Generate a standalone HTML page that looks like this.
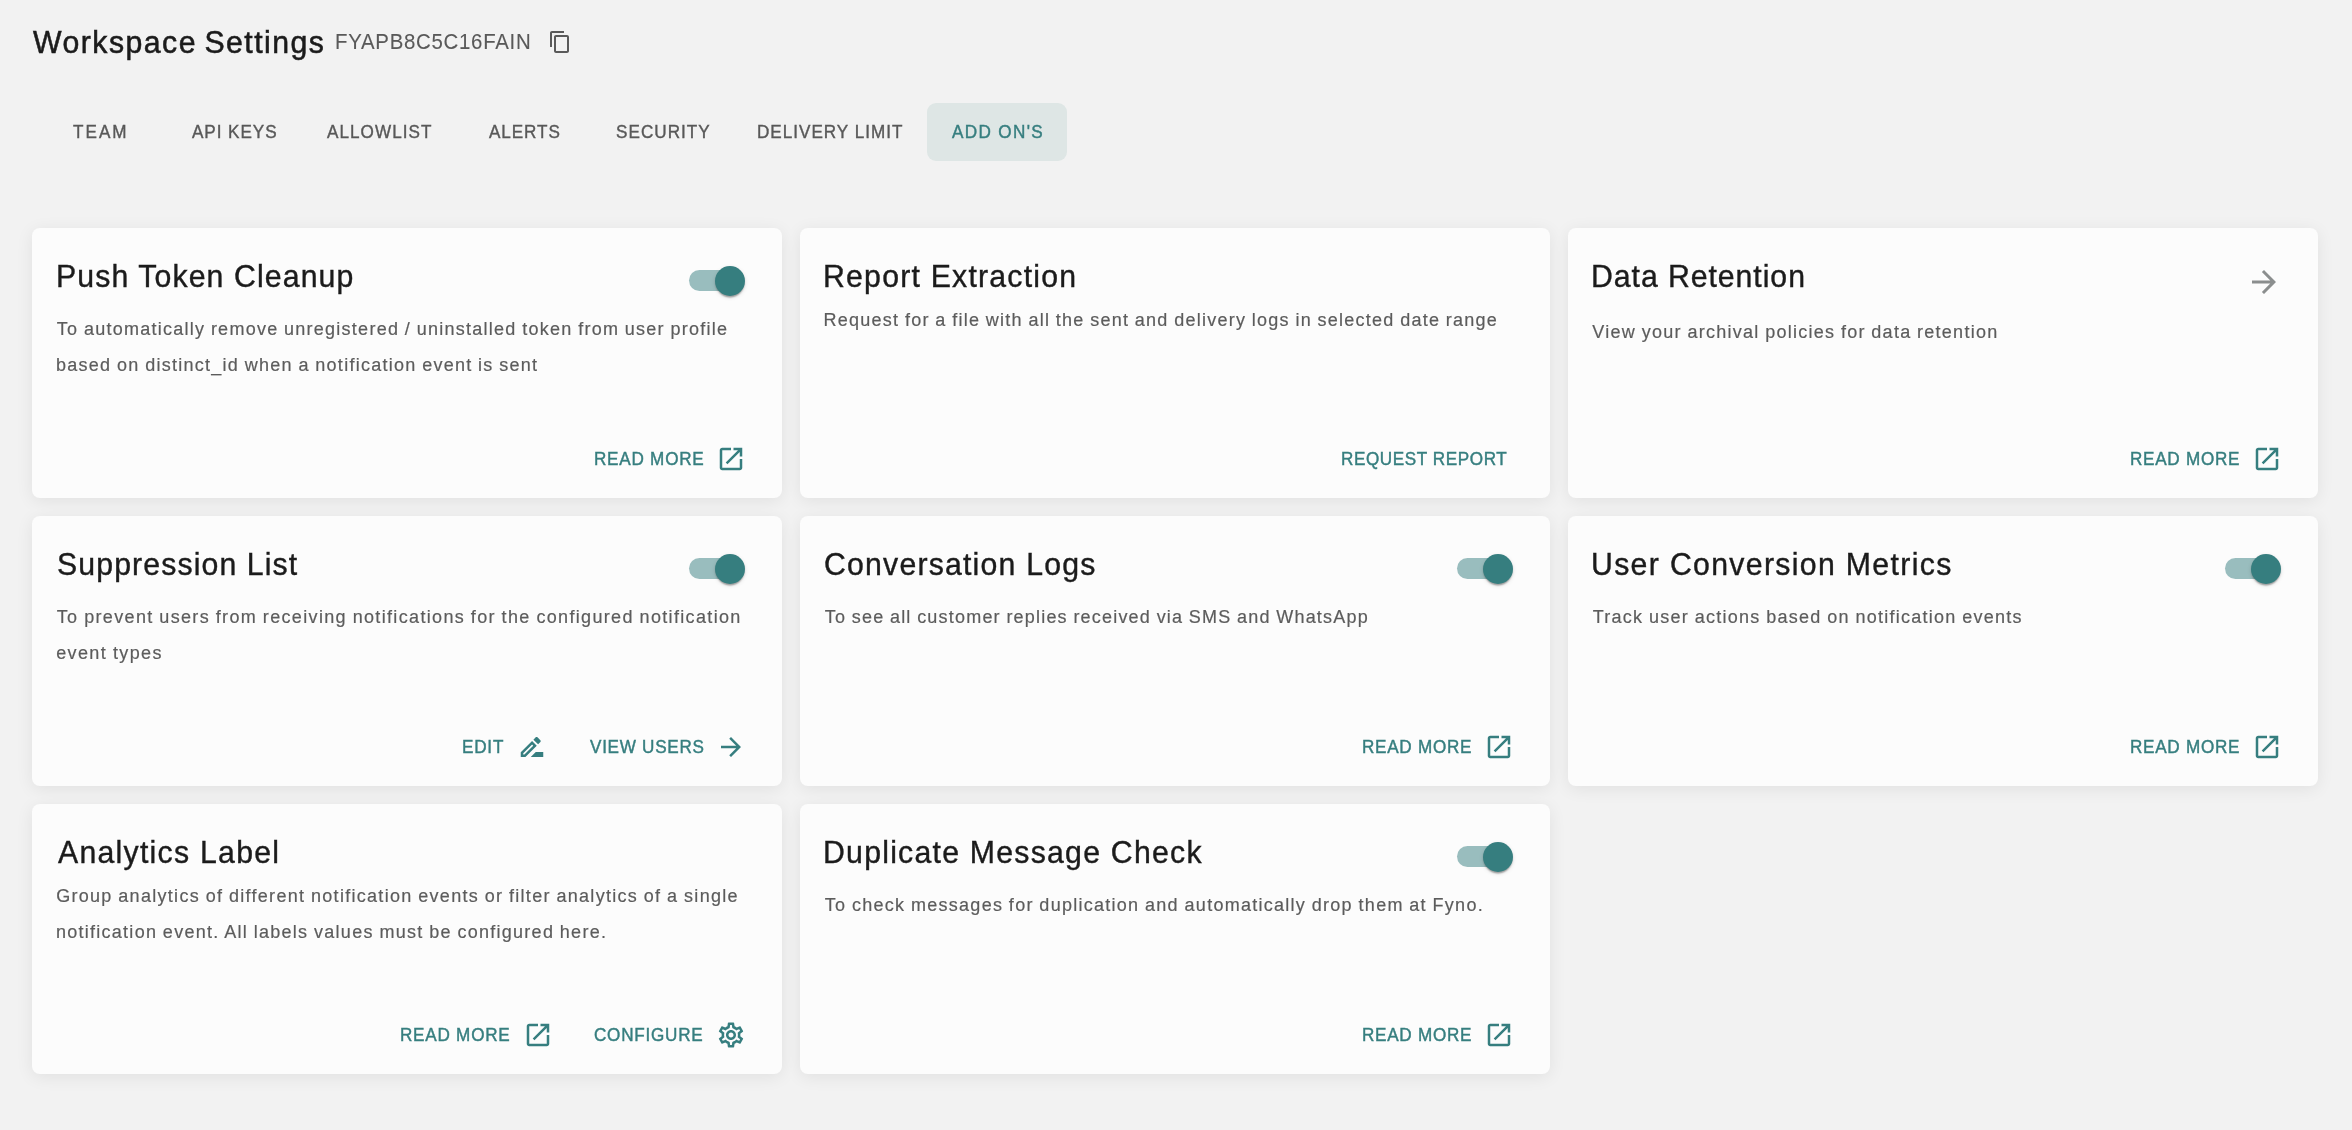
<!DOCTYPE html>
<html lang="en">
<head>
<meta charset="utf-8">
<title>Workspace Settings</title>
<style>
*{box-sizing:border-box;margin:0;padding:0}
html,body{width:2352px;height:1130px;overflow:hidden}
#app{position:absolute;left:0;top:0;width:2352px;height:1130px;will-change:transform}
body{background:#f2f2f2;font-family:"Liberation Sans",sans-serif;position:relative}
.t{position:absolute;white-space:nowrap;line-height:1;font-weight:400;transform-origin:0 50%}
.h1{transform:scaleX(.97);font-size:31.2px;color:#1b1b1b;-webkit-text-stroke:.55px #1b1b1b;word-spacing:-2.5px}
.wsid{transform:scaleX(.92);font-size:22.2px;color:#595959;-webkit-text-stroke:.1px #595959}
.tab{transform:scaleX(.95);font-size:18px;color:#585858;-webkit-text-stroke:.4px #585858}
.tab.sel{color:#367e7f;-webkit-text-stroke:.45px #367e7f}
.pill{position:absolute;left:927px;top:103px;width:140px;height:57.5px;border-radius:9px;background:#dee6e5}
.copy{position:absolute;left:548px;top:30px;width:24px;height:24px;fill:#5a5a5a}
.card{position:absolute;width:750px;height:270px;border-radius:8px;background:#fcfcfc;box-shadow:0 3px 17px 0 rgba(0,0,0,.075)}
.title{transform:scaleX(.97);font-size:31.2px;color:#1b1b1b;-webkit-text-stroke:.4px #1b1b1b}
.dl{word-spacing:-.6px;font-size:18px;color:#5c5c5c;-webkit-text-stroke:.2px #5c5c5c}
.btn{transform:scaleX(.95);font-size:18px;color:#367e7f;-webkit-text-stroke:.45px #367e7f}
.ic{position:absolute;width:30px;height:30px;fill:#367e7f}
.go{position:absolute;left:678px;top:36px;width:36px;height:36px;fill:#8b8e8e}
.sw{position:absolute;left:657px;top:38px;width:56px;height:30px}
.sw i{position:absolute;left:0;top:4px;width:51px;height:21px;border-radius:10.5px;background:#367e7f;opacity:.5}
.sw b{position:absolute;left:26px;top:0;width:30px;height:30px;border-radius:50%;background:#367e7f;box-shadow:0 3px 1.5px -1.5px rgba(0,0,0,.2),0 1.5px 1.5px 0 rgba(0,0,0,.14),0 1.5px 4.5px 0 rgba(0,0,0,.12)}
button{border:0;background:none;font-family:inherit;cursor:pointer}
h1,h2{font-weight:400}
a{text-decoration:none}
</style>
</head>
<body>
<div id="app">
<header>

<h1 class="t h1" style="left:32.81px;top:27.19px;letter-spacing:1.511px">Workspace Settings</h1>
<span class="t wsid" style="left:335.43px;top:31.31px;letter-spacing:0.777px">FYAPB8C5C16FAIN</span>
<svg class="copy" viewBox="0 0 24 24"><path d="M16 1H4c-1.100 0-2 .9-2 2v14h2V3h12V1zm3 4H8c-1.100 0-2 .9-2 2v14c0 1.100.9 2 2 2h11c1.100 0 2-.9 2-2V7c0-1.100-.9-2-2-2zm0 16H8V7h11v14z"/></svg>
</header>
<nav>
<div class="pill"></div>
<a class="t tab" style="left:73.34px;top:122.76px;letter-spacing:2.127px">TEAM</a>
<a class="t tab" style="left:192.28px;top:122.76px;letter-spacing:0.998px">API KEYS</a>
<a class="t tab" style="left:326.78px;top:122.76px;letter-spacing:1.12px">ALLOWLIST</a>
<a class="t tab" style="left:489.43px;top:122.76px;letter-spacing:0.971px">ALERTS</a>
<a class="t tab" style="left:615.79px;top:122.76px;letter-spacing:1.087px">SECURITY</a>
<a class="t tab" style="left:756.59px;top:122.76px;letter-spacing:1.047px">DELIVERY LIMIT</a>
<a class="t tab sel" style="left:951.76px;top:122.76px;letter-spacing:1.441px">ADD ON'S</a>
</nav>
<main>
<section class="card" style="left:32px;top:228px">
<h2 class="t title" style="left:23.82px;top:33.19px;letter-spacing:1.134px">Push Token Cleanup</h2>
<div class="sw"><i></i><b></b></div>
<p>
<span class="t dl" style="left:24.74px;top:91.76px;letter-spacing:1.252px">To automatically remove unregistered / uninstalled token from user profile</span>
<span class="t dl" style="left:23.99px;top:127.76px;letter-spacing:1.257px">based on distinct_id when a notification event is sent</span>
</p>
<button class="t btn" style="left:561.64px;top:221.76px;letter-spacing:0.812px">READ MORE</button>
<svg class="ic" viewBox="0 0 24 24" style="left:684px;top:216px"><path d="M19 19H5V5h7V3H5c-1.11 0-2 .9-2 2v14c0 1.1.89 2 2 2h14c1.1 0 2-.9 2-2v-7h-2v7zM14 3v2h3.59l-9.830 9.830 1.410 1.410L19 6.410V10h2V3h-7z"/></svg>
</section>
<section class="card" style="left:800px;top:228px">
<h2 class="t title" style="left:23.32px;top:33.19px;letter-spacing:1.251px">Report Extraction</h2>
<p>
<span class="t dl" style="left:23.55px;top:82.76px;letter-spacing:1.241px">Request for a file with all the sent and delivery logs in selected date range</span>
</p>
<button class="t btn" style="left:541.14px;top:221.76px;letter-spacing:0.626px">REQUEST REPORT</button>
</section>
<section class="card" style="left:1568px;top:228px">
<h2 class="t title" style="left:23.32px;top:33.19px;letter-spacing:0.963px">Data Retention</h2>
<svg class="go" viewBox="0 0 24 24"><path d="m12 4-1.410 1.410L16.170 11H4v2h12.170l-5.580 5.590L12 20l8-8z"/></svg>
<p>
<span class="t dl" style="left:24.37px;top:94.76px;letter-spacing:1.257px">View your archival policies for data retention</span>
</p>
<button class="t btn" style="left:562.43px;top:221.76px;letter-spacing:0.776px">READ MORE</button>
<svg class="ic" viewBox="0 0 24 24" style="left:684px;top:216px"><path d="M19 19H5V5h7V3H5c-1.11 0-2 .9-2 2v14c0 1.1.89 2 2 2h14c1.1 0 2-.9 2-2v-7h-2v7zM14 3v2h3.59l-9.830 9.830 1.410 1.410L19 6.410V10h2V3h-7z"/></svg>
</section>
<section class="card" style="left:32px;top:516px">
<h2 class="t title" style="left:24.57px;top:33.19px;letter-spacing:1.138px">Suppression List</h2>
<div class="sw"><i></i><b></b></div>
<p>
<span class="t dl" style="left:24.74px;top:91.76px;letter-spacing:1.338px">To prevent users from receiving notifications for the configured notification</span>
<span class="t dl" style="left:24.23px;top:127.76px;letter-spacing:1.373px">event types</span>
</p>
<button class="t btn" style="left:430.14px;top:221.76px;letter-spacing:0.845px">EDIT</button>
<svg class="ic" viewBox="0 0 24 24" style="left:485px;top:216px"><path d="M15 16l-4 4h10v-4zM12.060 7.190L3 16.250V20h3.750l9.060-9.060-3.750-3.750zM5.920 18H5v-.92l7.060-7.060.92.920L5.920 18zM18.710 8.040c.39-.39.39-1.020 0-1.410l-2.340-2.340c-.2-.2-.45-.29-.71-.29-.25 0-.51.1-.7.290l-1.830 1.830 3.750 3.750 1.830-1.830z"/></svg>
<button class="t btn" style="left:557.76px;top:221.76px;letter-spacing:0.765px">VIEW USERS</button>
<svg class="ic" viewBox="0 0 24 24" style="left:684px;top:216px"><path d="m12 4-1.410 1.410L16.170 11H4v2h12.170l-5.580 5.590L12 20l8-8z"/></svg>
</section>
<section class="card" style="left:800px;top:516px">
<h2 class="t title" style="left:24.29px;top:33.19px;letter-spacing:1.228px">Conversation Logs</h2>
<div class="sw"><i></i><b></b></div>
<p>
<span class="t dl" style="left:24.74px;top:91.76px;letter-spacing:1.199px">To see all customer replies received via SMS and WhatsApp</span>
</p>
<button class="t btn" style="left:562.43px;top:221.76px;letter-spacing:0.776px">READ MORE</button>
<svg class="ic" viewBox="0 0 24 24" style="left:684px;top:216px"><path d="M19 19H5V5h7V3H5c-1.11 0-2 .9-2 2v14c0 1.1.89 2 2 2h14c1.1 0 2-.9 2-2v-7h-2v7zM14 3v2h3.59l-9.830 9.830 1.410 1.410L19 6.410V10h2V3h-7z"/></svg>
</section>
<section class="card" style="left:1568px;top:516px">
<h2 class="t title" style="left:23.36px;top:33.19px;letter-spacing:1.363px">User Conversion Metrics</h2>
<div class="sw"><i></i><b></b></div>
<p>
<span class="t dl" style="left:24.74px;top:91.76px;letter-spacing:1.259px">Track user actions based on notification events</span>
</p>
<button class="t btn" style="left:562.43px;top:221.76px;letter-spacing:0.776px">READ MORE</button>
<svg class="ic" viewBox="0 0 24 24" style="left:684px;top:216px"><path d="M19 19H5V5h7V3H5c-1.11 0-2 .9-2 2v14c0 1.1.89 2 2 2h14c1.1 0 2-.9 2-2v-7h-2v7zM14 3v2h3.59l-9.830 9.830 1.410 1.410L19 6.410V10h2V3h-7z"/></svg>
</section>
<section class="card" style="left:32px;top:804px">
<h2 class="t title" style="left:25.66px;top:33.19px;letter-spacing:1.294px">Analytics Label</h2>
<p>
<span class="t dl" style="left:24.13px;top:82.76px;letter-spacing:1.292px">Group analytics of different notification events or filter analytics of a single</span>
<span class="t dl" style="left:23.89px;top:118.76px;letter-spacing:1.272px">notification event. All labels values must be configured here.</span>
</p>
<button class="t btn" style="left:368.24px;top:221.76px;letter-spacing:0.811px">READ MORE</button>
<svg class="ic" viewBox="0 0 24 24" style="left:491px;top:216px"><path d="M19 19H5V5h7V3H5c-1.11 0-2 .9-2 2v14c0 1.1.89 2 2 2h14c1.1 0 2-.9 2-2v-7h-2v7zM14 3v2h3.59l-9.830 9.830 1.410 1.410L19 6.410V10h2V3h-7z"/></svg>
<button class="t btn" style="left:562.46px;top:221.76px;letter-spacing:0.812px">CONFIGURE</button>
<svg class="ic" viewBox="0 0 24 24" style="left:684px;top:216px"><path d="M19.430 12.980c.04-.32.07-.64.07-.98 0-.34-.03-.66-.07-.98l2.110-1.650c.19-.15.240-.42.120-.64l-2-3.460c-.09-.16-.26-.25-.44-.25-.06 0-.12.010-.17.030l-2.490 1c-.52-.4-1.080-.73-1.690-.98l-.38-2.650C14.460 2.180 14.250 2 14 2h-4c-.25 0-.46.180-.49.420l-.38 2.650c-.61.250-1.170.59-1.690.98l-2.490-1c-.06-.02-.12-.03-.18-.03-.17 0-.34.09-.43.250l-2 3.460c-.13.220-.07.490.12.640l2.110 1.650c-.04.320-.07.650-.07.980 0 .33.030.66.070.98l-2.110 1.650c-.19.150-.24.420-.12.640l2 3.460c.09.160.26.250.44.250.06 0 .12-.01.17-.03l2.490-1c.52.400 1.080.73 1.690.98l.38 2.650c.03.240.24.420.49.420h4c.25 0 .46-.18.490-.42l.38-2.650c.61-.25 1.170-.59 1.690-.98l2.490 1c.06.020.12.030.18.030.17 0 .34-.09.43-.25l2-3.460c.12-.22.070-.49-.12-.64l-2.110-1.650zm-1.980-1.710c.04.310.05.520.05.730 0 .21-.02.430-.05.730l-.14 1.130.89.700 1.080.84-.7 1.210-1.270-.51-1.040-.42-.9.680c-.43.320-.84.560-1.250.73l-1.060.43-.16 1.130-.2 1.350h-1.400l-.19-1.350-.16-1.130-1.060-.43c-.43-.18-.83-.41-1.230-.71l-.91-.7-1.060.43-1.270.51-.7-1.210 1.080-.84.890-.7-.14-1.130c-.03-.31-.05-.54-.05-.74s.02-.43.050-.73l.14-1.130-.89-.7-1.080-.84.700-1.210 1.270.51 1.040.42.900-.68c.43-.32.840-.56 1.250-.73l1.060-.43.160-1.130.2-1.350h1.390l.19 1.350.16 1.130 1.060.43c.43.180.83.410 1.230.71l.91.700 1.060-.43 1.270-.51.700 1.210-1.070.85-.89.700.14 1.130zM12 8c-2.210 0-4 1.790-4 4s1.790 4 4 4 4-1.790 4-4-1.790-4-4-4zm0 6c-1.100 0-2-.9-2-2s.9-2 2-2 2 .9 2 2-.9 2-2 2z"/></svg>
</section>
<section class="card" style="left:800px;top:804px">
<h2 class="t title" style="left:23.32px;top:33.19px;letter-spacing:1.27px">Duplicate Message Check</h2>
<div class="sw"><i></i><b></b></div>
<p>
<span class="t dl" style="left:24.74px;top:91.76px;letter-spacing:1.27px">To check messages for duplication and automatically drop them at Fyno.</span>
</p>
<button class="t btn" style="left:562.43px;top:221.76px;letter-spacing:0.776px">READ MORE</button>
<svg class="ic" viewBox="0 0 24 24" style="left:684px;top:216px"><path d="M19 19H5V5h7V3H5c-1.11 0-2 .9-2 2v14c0 1.1.89 2 2 2h14c1.1 0 2-.9 2-2v-7h-2v7zM14 3v2h3.59l-9.830 9.830 1.410 1.410L19 6.410V10h2V3h-7z"/></svg>
</section>
</main>
</div>
</body>
</html>
